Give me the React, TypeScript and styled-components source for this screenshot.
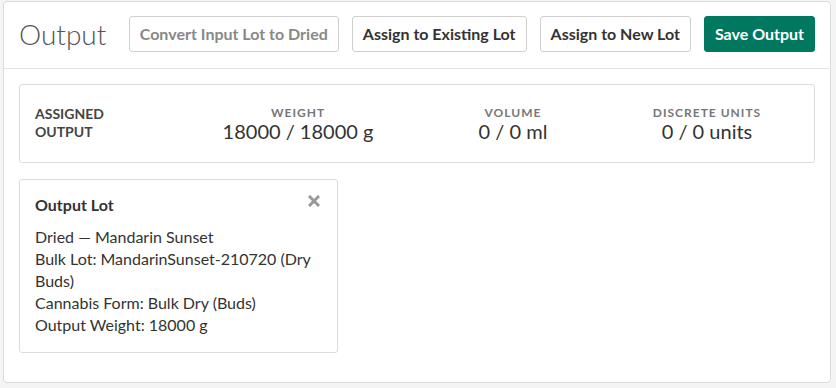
import React from 'react'
import styled, { createGlobalStyle } from 'styled-components'

const GlobalStyle = createGlobalStyle`
  html, body {
    margin: 0;
    padding: 0;
    background: #f4f4f5;
    font-family: Lato, "Open Sans", sans-serif;
    color: #333;
  }
`

const Page = styled.div`
  padding: 1px 5px 4px 3px;
`

const Panel = styled.div`
  background: #fff;
  border: 1px solid #dcdcdc;
  border-radius: 4px;
`

const Header = styled.div`
  display: flex;
  align-items: center;
  justify-content: space-between;
  height: 63px;
  padding: 0 15px 3px;
  border-bottom: 1px solid #e2e2e2;
`

const Title = styled.h2`
  margin: 0;
  font-size: 28px;
  font-weight: 300;
  color: #555;
`

const Actions = styled.div`
  display: flex;
  gap: 13px;
`

const Button = styled.button<{ $variant?: 'muted' | 'primary' }>`
  height: 36px;
  padding: 0 10px;
  font-family: Lato, sans-serif;
  font-size: 16px;
  font-weight: 700;
  border-radius: 3px;
  border: 1px solid ${p => (p.$variant === 'primary' ? '#00785f' : '#cfcfcf')};
  background: ${p => (p.$variant === 'primary' ? '#00785f' : '#fff')};
  color: ${p => (p.$variant === 'primary' ? '#fff' : p.$variant === 'muted' ? '#888' : '#333')};
  cursor: pointer;
`

const Body = styled.div`
  padding: 15px 15px 29px;
  display: flex;
  flex-direction: column;
  gap: 16px;
`

const Summary = styled.div`
  display: grid;
  grid-template-columns: 150px 226px 204px 184px;
  align-items: center;
  height: 77px;
  padding: 0 15px;
  border: 1px solid #dcdcdc;
  border-radius: 3px;
`

const SummaryLabel = styled.div`
  font-size: 14px;
  font-weight: 700;
  line-height: 18px;
  text-transform: uppercase;
  color: #444;
  margin-top: -2px;
`

const Stat = styled.div`
  text-align: center;
`

const StatLabel = styled.div`
  font-size: 12px;
  font-weight: 700;
  letter-spacing: 1px;
  text-transform: uppercase;
  color: #777;
  line-height: 14px;
`

const StatValue = styled.div`
  font-size: 20px;
  color: #333;
  line-height: 22px;
`

const LotCard = styled.div`
  position: relative;
  width: 287px;
  padding: 15px 15px 16px;
  border: 1px solid #dcdcdc;
  border-radius: 3px;
`

const LotTitle = styled.div`
  font-size: 16px;
  font-weight: 700;
  color: #333;
  margin-bottom: 12px;
`

const LotLine = styled.div`
  font-size: 16px;
  line-height: 22px;
  color: #333;
`

const Close = styled.button`
  position: absolute;
  top: 15px;
  right: 17px;
  padding: 0;
  border: 0;
  background: none;
  cursor: pointer;
  display: flex;
`

const stats = [
  { label: 'Weight', value: '18000 / 18000 g' },
  { label: 'Volume', value: '0 / 0 ml' },
  { label: 'Discrete Units', value: '0 / 0 units' },
]

function App() {
  return (
    <Page>
      <GlobalStyle />
      <Panel>
        <Header>
          <Title>Output</Title>
          <Actions>
            <Button $variant="muted">Convert Input Lot to Dried</Button>
            <Button>Assign to Existing Lot</Button>
            <Button>Assign to New Lot</Button>
            <Button $variant="primary">Save Output</Button>
          </Actions>
        </Header>
        <Body>
          <Summary>
            <SummaryLabel>
              Assigned
              <br />
              Output
            </SummaryLabel>
            {stats.map(s => (
              <Stat key={s.label}>
                <StatLabel>{s.label}</StatLabel>
                <StatValue>{s.value}</StatValue>
              </Stat>
            ))}
          </Summary>
          <LotCard>
            <Close aria-label="Remove">
              <svg width="12" height="12" viewBox="0 0 12 12">
                <path d="M2 2 L10 10 M10 2 L2 10" stroke="#999" strokeWidth="3" strokeLinecap="square" />
              </svg>
            </Close>
            <LotTitle>Output Lot</LotTitle>
            <LotLine>Dried — Mandarin Sunset</LotLine>
            <LotLine>Bulk Lot: MandarinSunset-210720 (Dry Buds)</LotLine>
            <LotLine>Cannabis Form: Bulk Dry (Buds)</LotLine>
            <LotLine>Output Weight: 18000 g</LotLine>
          </LotCard>
        </Body>
      </Panel>
    </Page>
  )
}

export default App
